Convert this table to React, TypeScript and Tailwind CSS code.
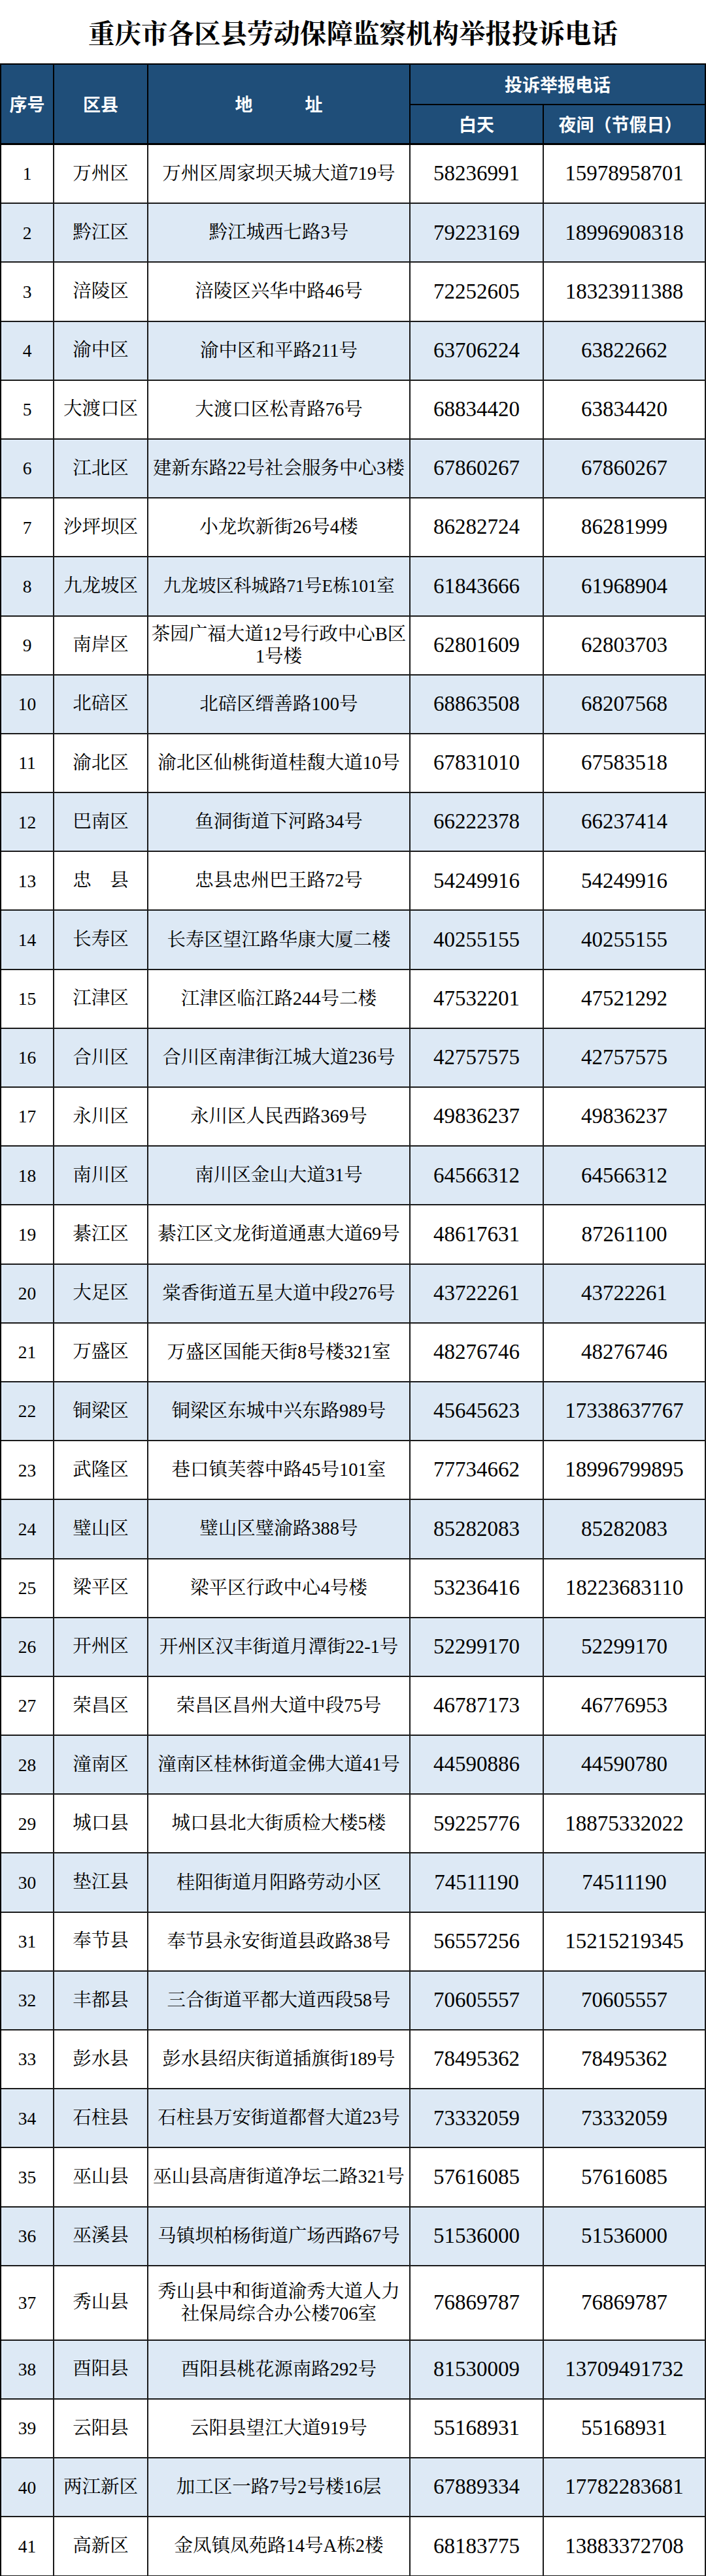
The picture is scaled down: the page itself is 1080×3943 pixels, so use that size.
import React from "react";

type Row = [string, string, string | string[], string, string];

const rows: Row[] = [
  ["1", "万州区", "万州区周家坝天城大道719号", "58236991", "15978958701"],
  ["2", "黔江区", "黔江城西七路3号", "79223169", "18996908318"],
  ["3", "涪陵区", "涪陵区兴华中路46号", "72252605", "18323911388"],
  ["4", "渝中区", "渝中区和平路211号", "63706224", "63822662"],
  ["5", "大渡口区", "大渡口区松青路76号", "68834420", "63834420"],
  ["6", "江北区", "建新东路22号社会服务中心3楼", "67860267", "67860267"],
  ["7", "沙坪坝区", "小龙坎新街26号4楼", "86282724", "86281999"],
  ["8", "九龙坡区", "九龙坡区科城路71号E栋101室", "61843666", "61968904"],
  ["9", "南岸区", ["茶园广福大道12号行政中心B区", "1号楼"], "62801609", "62803703"],
  ["10", "北碚区", "北碚区缙善路100号", "68863508", "68207568"],
  ["11", "渝北区", "渝北区仙桃街道桂馥大道10号", "67831010", "67583518"],
  ["12", "巴南区", "鱼洞街道下河路34号", "66222378", "66237414"],
  ["13", "忠\u3000县", "忠县忠州巴王路72号", "54249916", "54249916"],
  ["14", "长寿区", "长寿区望江路华康大厦二楼", "40255155", "40255155"],
  ["15", "江津区", "江津区临江路244号二楼", "47532201", "47521292"],
  ["16", "合川区", "合川区南津街江城大道236号", "42757575", "42757575"],
  ["17", "永川区", "永川区人民西路369号", "49836237", "49836237"],
  ["18", "南川区", "南川区金山大道31号", "64566312", "64566312"],
  ["19", "綦江区", "綦江区文龙街道通惠大道69号", "48617631", "87261100"],
  ["20", "大足区", "棠香街道五星大道中段276号", "43722261", "43722261"],
  ["21", "万盛区", "万盛区国能天街8号楼321室", "48276746", "48276746"],
  ["22", "铜梁区", "铜梁区东城中兴东路989号", "45645623", "17338637767"],
  ["23", "武隆区", "巷口镇芙蓉中路45号101室", "77734662", "18996799895"],
  ["24", "璧山区", "璧山区璧渝路388号", "85282083", "85282083"],
  ["25", "梁平区", "梁平区行政中心4号楼", "53236416", "18223683110"],
  ["26", "开州区", "开州区汉丰街道月潭街22-1号", "52299170", "52299170"],
  ["27", "荣昌区", "荣昌区昌州大道中段75号", "46787173", "46776953"],
  ["28", "潼南区", "潼南区桂林街道金佛大道41号", "44590886", "44590780"],
  ["29", "城口县", "城口县北大街质检大楼5楼", "59225776", "18875332022"],
  ["30", "垫江县", "桂阳街道月阳路劳动小区", "74511190", "74511190"],
  ["31", "奉节县", "奉节县永安街道县政路38号", "56557256", "15215219345"],
  ["32", "丰都县", "三合街道平都大道西段58号", "70605557", "70605557"],
  ["33", "彭水县", "彭水县绍庆街道插旗街189号", "78495362", "78495362"],
  ["34", "石柱县", "石柱县万安街道都督大道23号", "73332059", "73332059"],
  ["35", "巫山县", "巫山县高唐街道净坛二路321号", "57616085", "57616085"],
  ["36", "巫溪县", "马镇坝柏杨街道广场西路67号", "51536000", "51536000"],
  ["37", "秀山县", ["秀山县中和街道渝秀大道人力", "社保局综合办公楼706室"], "76869787", "76869787"],
  ["38", "酉阳县", "酉阳县桃花源南路292号", "81530009", "13709491732"],
  ["39", "云阳县", "云阳县望江大道919号", "55168931", "55168931"],
  ["40", "两江新区", "加工区一路7号2号楼16层", "67889334", "17782283681"],
  ["41", "高新区", "金凤镇凤苑路14号A栋2楼", "68183775", "13883372708"],
];

const bodyFont =
  "font-['Liberation_Serif','Noto_Serif_CJK_SC','Noto_Sans_CJK_SC',serif]";
const headFont = "font-['Noto_Sans_CJK_SC',sans-serif]";

export default function App() {
  return (
    <div className="w-[1080px] bg-white text-black">
      <div className="h-[97px] flex items-center justify-center">
        <h1 className="text-[40.5px] font-bold leading-none font-['Noto_Serif_CJK_SC','Noto_Sans_CJK_SC',serif] pt-[2px]">
          重庆市各区县劳动保障监察机构举报投诉电话
        </h1>
      </div>

      <div className="border-t-2 border-l-2 border-black">
        {/* header */}
        <div
          className={`grid grid-cols-[81px_144px_401px_204px_248px] grid-rows-[62px_61px] bg-[#1f4e79] text-white font-bold text-[27px] ${headFont}`}
        >
          <div className="row-span-2 border-r-2 border-b-[3px] border-black flex items-center justify-center">
            序号
          </div>
          <div className="row-span-2 border-r-2 border-b-[3px] border-black flex items-center justify-center">
            区县
          </div>
          <div className="row-span-2 border-r-2 border-b-[3px] border-black flex items-center justify-center gap-[80px]">
            <span>地</span>
            <span>址</span>
          </div>
          <div className="col-span-2 border-r-2 border-b-2 border-black flex items-center justify-center">
            投诉举报电话
          </div>
          <div className="border-r-2 border-b-[3px] border-black flex items-center justify-center">
            白天
          </div>
          <div className="border-r-2 border-b-[3px] border-black flex items-center justify-center pr-[12px]">
            夜间（节假日）
          </div>
        </div>

        {/* body */}
        {rows.map((r, i) => {
          const tall = r[0] === "37";
          const bg = i % 2 === 1 ? "bg-[#dde9f5]" : "bg-white";
          const cell =
            "border-r-2 border-b-2 border-[#1a1a1a] flex items-center justify-center text-center";
          const addr = r[2];
          const small = r[0] === "8";
          return (
            <div
              key={r[0]}
              className={`grid grid-cols-[81px_144px_401px_204px_248px] ${
                tall ? "h-[114px]" : "h-[90.2px]"
              } ${bg} ${bodyFont}`}
            >
              <div className={`${cell} text-[27.5px]`}>{r[0]}</div>
              <div className={`${cell} text-[28.5px] whitespace-pre`}>{r[1]}</div>
              <div
                className={`${cell} ${
                  small ? "text-[27px]" : "text-[28.5px]"
                } flex-col leading-[34px] whitespace-nowrap`}
              >
                {Array.isArray(addr) ? (
                  addr.map((l) => <span key={l}>{l}</span>)
                ) : (
                  <span>{addr}</span>
                )}
              </div>
              <div className={`${cell} text-[33px]`}>{r[3]}</div>
              <div className={`${cell} text-[33px]`}>{r[4]}</div>
            </div>
          );
        })}
      </div>
    </div>
  );
}
